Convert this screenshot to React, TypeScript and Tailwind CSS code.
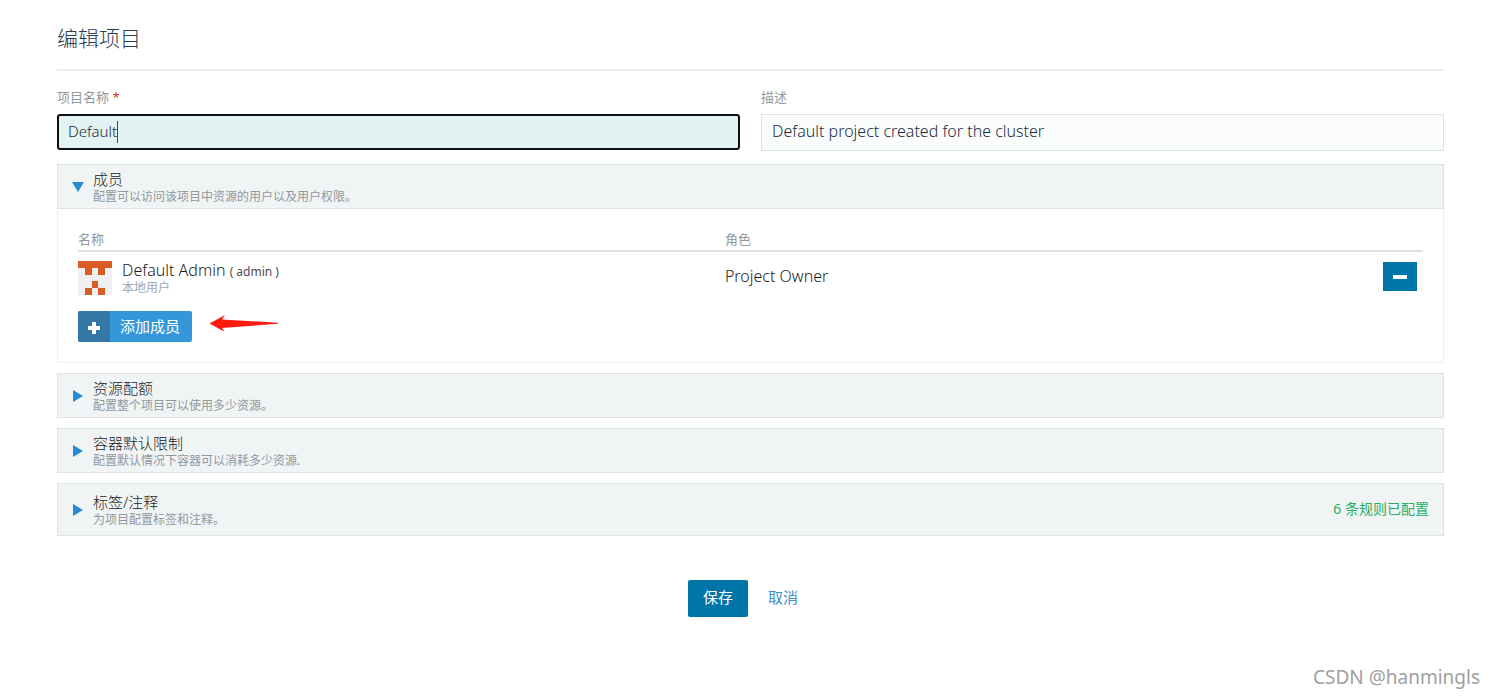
import { useState, type ReactNode } from "react";

function Triangle({ open }: { open: boolean }) {
  return (
    <svg viewBox="0 0 12 12" className="mb-0.5 h-3 w-3 shrink-0 fill-[#268bd2]" aria-hidden="true">
      {open ? <path d="M0 1H12L6 11Z" /> : <path d="M1 0V12L11 6Z" />}
    </svg>
  );
}

type PanelProps = {
  title: string;
  detail: string;
  status?: string;
  initiallyOpen?: boolean;
  children?: ReactNode;
};

function Panel({ title, detail, status, initiallyOpen = false, children }: PanelProps) {
  const [open, setOpen] = useState(initiallyOpen);
  return (
    <section>
      <button
        type="button"
        aria-expanded={open}
        onClick={() => setOpen(!open)}
        className={
          status
            ? "flex w-full items-center gap-[9px] border border-[#dae4e4] bg-[#f0f4f5] px-3.5 pt-[9px] pb-[7px] text-left"
            : "flex w-full items-center gap-[9px] border border-[#dae4e4] bg-[#f0f4f5] px-3.5 pt-[5px] pb-[3px] text-left"
        }
      >
        <Triangle open={open} />
        <span className="flex-1">
          <span className="block text-[15px] leading-[18px] text-[#1c1c1c]">{title}</span>
          <span className="block text-[12px] leading-[17px] font-normal text-[#90989d]">{detail}</span>
        </span>
        {status && <span className="pb-[3px] text-[14px] leading-5 font-normal text-[#27ae60]">{status}</span>}
      </button>
      {open && children && (
        <div className="border border-t-0 border-[#eeeeee] px-5 pt-5 pb-5">{children}</div>
      )}
    </section>
  );
}

function Avatar() {
  return (
    <svg viewBox="0 0 5 5" className="h-[34px] w-[34px] shrink-0" shapeRendering="crispEdges" aria-hidden="true">
      <rect width="5" height="5" fill="#f0f0f0" />
      <path d="M0 0H5V1H4V2H3V1H2V2H1V1H0ZM2 3H3V4H4V5H3V4H2V5H1V4H2Z" fill="#d95b26" />
    </svg>
  );
}

function Members() {
  return (
    <>
      <table className="w-full table-fixed text-left">
        <thead>
          <tr className="border-b-2 border-[#dfdfdf] text-[13px] leading-5 text-[#90989d]">
            <th className="w-[48.1%] p-0 pb-px font-normal">名称</th>
            <th className="p-0 pb-px font-normal">角色</th>
            <th className="w-10 p-0" aria-label="操作" />
          </tr>
        </thead>
        <tbody>
          <tr>
            <td className="p-0 pt-[9px]">
              <div className="flex gap-2.5">
                <Avatar />
                <div>
                  <div className="text-[16px] leading-[18px] text-[#1c1c1c]">
                    Default Admin <span className="text-[12px] font-normal text-[#4c4c4c]">( admin )</span>
                  </div>
                  <div className="text-[12px] leading-[14px] font-normal text-[#a3a7aa]">本地用户</div>
                </div>
              </div>
            </td>
            <td className="p-0 pt-1 text-[16px] text-[#1c1c1c]">Project Owner</td>
            <td className="p-0 pt-[5px]">
              <button
                type="button"
                aria-label="移除成员"
                className="flex h-[29px] w-[34px] items-center justify-center bg-[#0075a8]"
              >
                <svg viewBox="0 0 14 4" className="mt-px h-1 w-3.5 fill-white" aria-hidden="true">
                  <rect width="14" height="4" rx="0.6" />
                </svg>
              </button>
            </td>
          </tr>
        </tbody>
      </table>
      <div className="flex items-start gap-[17px] pt-4">
        <button
          type="button"
          className="flex h-[31px] items-stretch overflow-hidden rounded-[2px] bg-[#3497da] text-[15px] text-white"
        >
          <span className="flex w-8 items-center justify-center bg-[#3578a8]">
            <svg viewBox="0 0 12 12" className="mt-[3px] h-3 w-3 fill-white" aria-hidden="true">
              <path d="M4 0H8V4H12V8H8V12H4V8H0V4H4Z" />
            </svg>
          </span>
          <span className="flex items-center pr-3 pl-2.5 font-normal">添加成员</span>
        </button>
        <svg viewBox="0 0 70 20" className="h-5 w-[70px] fill-[#ff1a0e]" aria-hidden="true">
          <path d="M0.5 12.5L16 4L13 8.5L69 11.7V12.7L13 17L16 21Z" />
        </svg>
      </div>
    </>
  );
}

export default function App() {
  const [name, setName] = useState("Default");
  const [description, setDescription] = useState("Default project created for the cluster");

  return (
    <main className="relative min-h-screen bg-white pt-5 pr-[51px] pb-10 pl-[57px] font-['Noto_Sans','Noto_Sans_CJK_SC',sans-serif] font-light">
      <h1 className="border-b-2 border-[#e9eeee] pb-[13px] text-[21px] leading-9 text-[#2a3c50]">
        编辑项目
      </h1>
      <form onSubmit={(e) => e.preventDefault()}>
        <div className="grid grid-cols-2 gap-[21px] pt-[17px]">
          <div>
            <label htmlFor="name" className="block pb-2 text-[13px] leading-[18px] font-normal text-[#90989d]">
              项目名称 <span className="text-[#f22c2c]">*</span>
            </label>
            <div className="relative">
              <input
                id="name"
                value={name}
                required
                onChange={(e) => setName(e.target.value)}
                className="block h-9 w-full rounded-[3px] border-2 border-[#101010] bg-[#e3f3f4] px-[9px] pb-[3px] text-[15px] text-[#1c2d40] outline-none"
              />
              <span className="pointer-events-none absolute top-[7px] left-[60px] h-[22px] w-px bg-[#34495e]" />
            </div>
          </div>
          <div>
            <label htmlFor="description" className="block pb-2 text-[13px] leading-[18px] font-normal text-[#90989d]">
              描述
            </label>
            <input
              id="description"
              value={description}
              onChange={(e) => setDescription(e.target.value)}
              className="block h-[37px] w-full border border-[#dae4e4] bg-[#fbfdfd] px-2.5 pb-[3px] text-[16px] text-[#1c2d40] outline-none"
            />
          </div>
        </div>

        <div className="flex flex-col gap-2.5 pt-[13px]">
          <Panel title="成员" detail="配置可以访问该项目中资源的用户以及用户权限。" initiallyOpen>
            <Members />
          </Panel>
          <Panel title="资源配额" detail="配置整个项目可以使用多少资源。" />
          <Panel title="容器默认限制" detail="配置默认情况下容器可以消耗多少资源." />
          <Panel title="标签/注释" detail="为项目配置标签和注释。" status="6 条规则已配置" />
        </div>

        <div className="flex items-center justify-center gap-[5px] pt-11">
          <button type="submit" className="h-[37px] rounded-[2px] bg-[#0075a8] px-[15px] pb-0.5 text-[15px] font-normal text-white">
            保存
          </button>
          <button type="button" className="h-[37px] px-[15px] pb-0.5 text-[15px] font-normal text-[#3d8fcb]">
            取消
          </button>
        </div>
      </form>
      <div className="absolute right-[15px] bottom-2 text-[19px] leading-[26px] font-normal text-[#a0a0a0]">
        CSDN @hanmingls
      </div>
    </main>
  );
}
